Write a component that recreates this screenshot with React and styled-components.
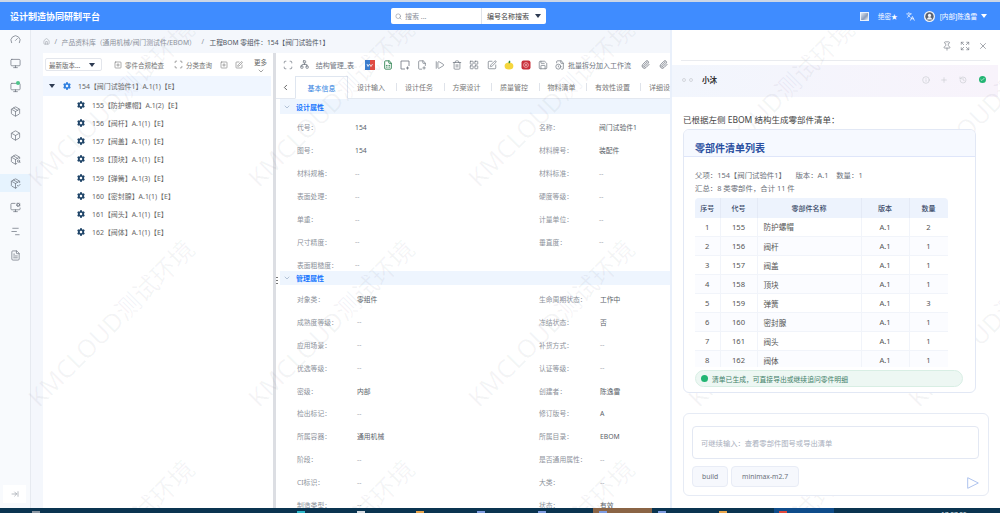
import React from 'react';
import styled, { createGlobalStyle } from 'styled-components';
import {
  Gauge, Monitor, Package, Box, PackageSearch, PackageCheck, MonitorCog, ChartNoAxesGantt, FileText,
  ArrowRightToLine, House, Search, Languages, Pin, Expand, X, Info, Plus, History, Check,
  Scan, Network, FileSpreadsheet, FilePlus2, StepForward, Trash2, LayoutGrid, SquarePen, Save, FileClock,
  Paperclip, SquarePlus, ChevronDown, ChevronLeft,
} from 'lucide-react';
import { FaCog } from 'react-icons/fa';

const FONT = `"Noto Sans", "Noto Sans CJK SC", sans-serif`;

const GlobalStyle = createGlobalStyle`
  * { margin: 0; padding: 0; box-sizing: border-box; }
  body { background: #fff; font-family: ${FONT}; overflow: hidden; }
`;

const Page = styled.div`
  position: relative;
  width: 1000px;
  height: 513px;
  overflow: hidden;
  display: flex;
  flex-direction: column;
  color: #444;
  border-top: 2px solid #ccd6e6;
`;

const Header = styled.header`
  position: relative;
  z-index: 3;
  height: 28px;
  flex: none;
  background: #3f8cff;
  color: #fff;
  display: flex;
  align-items: center;
  padding-left: 10px;
`;
const Title = styled.h1`
  width: 381px;
  font-size: 9px;
  font-weight: 700;
  white-space: nowrap;
`;
const SearchBox = styled.div`
  width: 155px;
  height: 16px;
  background: #fff;
  border-radius: 2px;
  display: flex;
  align-items: center;
  color: #8a8f99;
  font-size: 7px;
`;
const SearchInput = styled.div`
  width: 91px;
  height: 100%;
  display: flex;
  align-items: center;
  gap: 3px;
  padding-left: 4px;
  border-right: 1px solid #dfe3ea;
`;
const SearchType = styled.div`
  flex: 1;
  display: flex;
  align-items: center;
  justify-content: space-between;
  padding: 0 5px;
  color: #444;
`;
const Caret = styled.i`
  width: 0;
  height: 0;
  border-left: 3px solid transparent;
  border-right: 3px solid transparent;
  border-top: 4px solid ${p => p.$color || '#2e3b52'};
`;
const HeaderRight = styled.div`
  margin-left: auto;
  display: flex;
  align-items: center;
  font-size: 6.6px;
  padding-right: 13px;
`;
const HeaderThumb = styled.span`
  width: 9px;
  height: 9px;
  margin-right: 9px;
  background: linear-gradient(135deg, #dfe8f5, #8a9cba 60%, #eef3fa);
  border: 1px solid #eaf1fb;
`;
const Translate = styled(Languages)`
  margin: 0 9px 0 8px;
`;
const UserName = styled.span`
  margin: 0 4px 0 5px;
`;

const Body = styled.div`
  flex: 1;
  min-height: 0;
  display: flex;
`;

const Sidebar = styled.nav`
  width: 31px;
  flex: none;
  background: #f8fafd;
  border-right: 1px solid #e6eaf0;
  display: flex;
  flex-direction: column;
  align-items: stretch;
`;
const SideItem = styled.div`
  position: relative;
  height: 18px;
  margin-bottom: 6px;
  display: flex;
  align-items: center;
  justify-content: center;
  color: #6d7480;
  background: ${p => (p.$active ? '#e6f3fe' : 'transparent')};
`;
const SideDot = styled.i`
  position: absolute;
  left: 16px;
  top: 3px;
  width: 4px;
  height: 4px;
  border-radius: 50%;
  background: #4cc38a;
`;
const Collapse = styled.button`
  margin: auto 4px 5px 3px;
  height: 18px;
  border: none;
  background: #fff;
  color: #8c929c;
  display: flex;
  align-items: center;
  justify-content: center;
`;

const Main = styled.main`
  width: 639px;
  flex: none;
  background: #f4f7fc;
  padding-left: 12px;
  display: flex;
  flex-direction: column;
`;
const Crumbs = styled.div`
  height: 23px;
  flex: none;
  display: flex;
  align-items: center;
  font-size: 6.85px;
  color: #8b909a;
  white-space: nowrap;
`;
const CrumbSep = styled.span`
  margin: 0 ${p => p.$gap}px;
`;
const CrumbNow = styled.span`
  font-size: 6.7px;
  color: #4c5360;
`;
const Workspace = styled.div`
  flex: 1;
  min-height: 0;
  display: flex;
  background: #fff;
`;

const TreePanel = styled.section`
  width: 230px;
  flex: none;
  display: flex;
  flex-direction: column;
`;
const TreeBar = styled.div`
  height: 23px;
  flex: none;
  display: flex;
  align-items: center;
  padding-left: 2px;
  font-size: 6.5px;
  color: #666;
  white-space: nowrap;
`;
const VersionSelect = styled.div`
  width: 57px;
  height: 13px;
  border: 1px solid #e3e6ec;
  border-radius: 2px;
  display: flex;
  align-items: center;
  justify-content: space-between;
  padding: 0 6px 0 3px;
  margin-right: 12px;
`;
const BarAction = styled.span`
  display: flex;
  align-items: center;
  gap: 3px;
  margin-right: ${p => p.$gap}px;
  color: #777;
`;
const More = styled.span`
  display: flex;
  flex-direction: column;
  align-items: center;
  margin: 5px 0 0 4px;
  line-height: 8px;
  color: #666;
`;
const TreeRow = styled.div`
  height: ${p => (p.$root ? 19.5 : 18.25)}px;
  flex: none;
  display: flex;
  align-items: center;
  padding-left: ${p => (p.$root ? 6 : 34)}px;
  background: ${p => (p.$root ? '#f0f6ff' : 'transparent')};
  font-size: 6.95px;
  color: #666;
  white-space: nowrap;
  width: 228px;
`;
const Gear = styled(FaCog)`
  width: 8px;
  height: 8px;
  margin-right: 7px;
  color: ${p => (p.$root ? '#2f80e0' : '#1f4468')};
`;
const TreeCaret = styled(Caret)`
  margin-right: 8px;
`;

const Splitter = styled.div`
  width: 3px;
  flex: none;
  background: #dcdee3;
`;

const DetailPanel = styled.section`
  position: relative;
  flex: 1;
  min-width: 0;
  overflow: hidden;
  display: flex;
  flex-direction: column;
`;
const ToolBar = styled.div`
  height: 23px;
  flex: none;
  display: flex;
  align-items: center;
  padding-left: 3px;
  font-size: 7px;
  color: #666;
  white-space: nowrap;
`;
const ToolIcon = styled.span`
  width: 17.3px;
  flex: none;
  display: flex;
  justify-content: center;
  color: #6f7580;
`;
const ToolLabel = styled.span`
  display: flex;
  align-items: center;
  gap: ${p => p.$gap}px;
  width: ${p => p.$w}px;
  padding-left: ${p => p.$pad}px;
  flex: none;
  color: #6f7580;
`;
const Tabs = styled.div`
  height: 23px;
  flex: none;
  display: flex;
  align-items: stretch;
  font-size: 7px;
  color: #777;
  white-space: nowrap;
  border-bottom: 1px solid #e3e8f0;
`;
const TabBack = styled.span`
  width: 19px;
  flex: none;
  display: flex;
  align-items: center;
  justify-content: center;
  color: #555;
`;
const ActiveTab = styled.span`
  width: 53px;
  flex: none;
  display: flex;
  align-items: center;
  justify-content: center;
  color: #2f80e0;
  border: 1px solid #dfe6f0;
  border-bottom: 1px solid #fff;
  margin-bottom: -1px;
  padding-top: 1px;
`;
const TabItem = styled.span`
  display: flex;
  align-items: center;
  width: ${p => p.$w}px;
  flex: none;
  padding-left: 9px;
  position: relative;
  &::before {
    content: '';
    display: ${p => (p.$sep ? 'block' : 'none')};
    position: absolute;
    left: 0;
    top: 7px;
    height: 8px;
    width: 1px;
    background: #dfe3ea;
  }
`;
const SectionHead = styled.div`
  height: ${p => p.$h}px;
  flex: none;
  margin-left: 4px;
  background: #eef5fe;
  color: #1677ff;
  font-size: 7px;
  font-weight: 700;
  display: flex;
  align-items: center;
  gap: 5px;
  padding-left: 3px;
  svg { color: #8aa0bc; }
`;
const Grip = styled.span`
  position: absolute;
  left: 0;
  top: 224px;
  width: 2px;
  height: 9px;
  background: repeating-linear-gradient(#777 0 1px, transparent 1px 3px);
`;
const Fields = styled.div`
  flex: none;
  display: grid;
  grid-template-columns: 242px 1fr;
  grid-auto-rows: 22.9px;
  padding: ${p => p.$top}px 0 0 21px;
  height: ${p => (p.$h ? `${p.$h}px` : 'auto')};
  font-size: 6.8px;
  white-space: nowrap;
`;
const Field = styled.div`
  display: flex;
  align-items: center;
`;
const FieldLabel = styled.span`
  width: ${p => p.$w}px;
  flex: none;
  color: #8d929b;
`;
const FieldValue = styled.span`
  color: ${p => (p.$empty ? '#a4a8b0' : '#5a5f69')};
`;

const AiPanel = styled.aside`
  flex: 1;
  min-width: 0;
  background: #fff;
  border-left: 2px solid #e9f0fb;
  display: flex;
  flex-direction: column;
  padding-bottom: 3px;
`;
const AiTop = styled.div`
  height: 31px;
  flex: none;
  margin: 0 10px 4px 9px;
  border-bottom: 1px solid #e9ebef;
  display: flex;
  align-items: center;
  justify-content: flex-end;
  gap: 8px;
  padding: 1px 2px 0 0;
  color: #777c85;
`;
const AiHead = styled.div`
  height: 32px;
  flex: none;
  margin-right: 2px;
  background: linear-gradient(90deg, #f2f6fd, #f8f3fb);
  display: flex;
  align-items: center;
  padding: 0 12px 3px 10px;
`;
const HeadDot = styled.i`
  width: 4px;
  height: 4px;
  margin-right: 3px;
  border: 1px solid #d4d7dd;
  border-radius: 50%;
`;
const AiName = styled.b`
  margin-left: 6px;
  font-size: 7.5px;
  font-weight: 700;
  color: #333;
`;
const HeadTools = styled.div`
  margin-left: auto;
  display: flex;
  align-items: center;
  gap: 10.5px;
  color: #c6c9cf;
`;
const OkBadge = styled.span`
  width: 7px;
  height: 7px;
  margin-left: 2px;
  border-radius: 50%;
  background: #22b573;
  color: #fff;
  display: flex;
  align-items: center;
  justify-content: center;
`;
const Lead = styled.p`
  margin: 18px 0 0 11px;
  height: 14px;
  font-size: 8.5px;
  line-height: 10px;
  color: #444;
  white-space: nowrap;
`;
const ListCard = styled.div`
  position: relative;
  z-index: 2;
  width: 293px;
  height: 264px;
  flex: none;
  margin-left: 11px;
  background: #fff;
  border: 1px solid #e2e8f5;
  border-radius: 6px;
  overflow: hidden;
`;
const CardHead = styled.div`
  height: 27px;
  background: #f6f9ff;
  border-bottom: 1px solid #dfe6fa;
  padding: 11px 0 0 11px;
  color: #2a4fa0;
  font-size: 10px;
  line-height: 14px;
  font-weight: 700;
`;
const CardMeta = styled.p`
  padding-left: 11px;
  font-size: 7.4px;
  line-height: 13px;
  color: #6b7079;
  white-space: nowrap;
  &:first-of-type { margin-top: 12px; }
`;
const TableClip = styled.div`
  margin: 3px 0 0 11px;
  width: 253px;
  height: 169px;
  overflow: hidden;
  border-radius: 4px 4px 0 0;
`;
const PartsTable = styled.table`
  width: 253px;
  border-collapse: collapse;
  table-layout: fixed;
  font-size: 7.6px;
  color: #555;
`;
const HeadCell = styled.th`
  height: 19.5px;
  background: #edf3fd;
  color: #3a4a68;
  font-weight: 500;
  font-size: 7px;
  border-right: 1px solid #e4eaf6;
`;
const Cell = styled.td`
  height: 19px;
  text-align: ${p => (p.$left ? 'left' : 'center')};
  padding-left: ${p => (p.$left ? 6 : 0)}px;
  border-right: 1px solid #f1f4fa;
  border-bottom: 1px solid #f1f4fa;
  background: ${p => (p.$odd ? '#fbfcff' : '#fff')};
`;
const StatusPill = styled.div`
  margin: 3px 0 0 11px;
  width: 268px;
  height: 17px;
  background: #edf7f3;
  border: 1px solid #d8eee4;
  border-radius: 9px;
  display: flex;
  align-items: center;
  gap: 4px;
  padding-left: 5px;
  font-size: 6.8px;
  color: #3f8069;
  white-space: nowrap;
`;
const StatusDot = styled.i`
  width: 7px;
  height: 7px;
  border-radius: 50%;
  background: #22b573;
`;
const Composer = styled.div`
  position: relative;
  z-index: 2;
  width: 306px;
  height: 83px;
  flex: none;
  margin: 20px 0 0 11px;
  background: #fff;
  border: 1px solid #e6ebf5;
  border-radius: 6px;
  padding: 12px 9px 0 8px;
`;
const Prompt = styled.div`
  height: 33px;
  border: 1px solid #e3e8f3;
  border-radius: 4px;
  display: flex;
  align-items: center;
  padding-left: 8px;
  font-size: 7.3px;
  color: #a9afbd;
`;
const ComposerFoot = styled.div`
  margin-top: 7px;
  display: flex;
  align-items: flex-start;
  gap: 3px;
`;
const Chip = styled.span`
  height: 21px;
  padding: 0 ${p => p.$pad}px;
  background: #f6f8fd;
  border: 1px solid #e8ecf6;
  border-radius: 4px;
  display: flex;
  align-items: center;
  font-size: 6.8px;
  color: #6b7079;
`;
const SendMark = styled.svg`
  margin: 11px 0 0 auto;
  width: 12px;
  height: 12px;
`;

const Taskbar = styled.footer`
  position: relative;
  z-index: 3;
  height: 5px;
  flex: none;
  background: #0a3450;
  display: flex;
  overflow: hidden;
`;
const TaskSlot = styled.span`
  width: ${p => p.$w}px;
  flex: none;
  height: 100%;
  background: ${p => p.$bg || 'transparent'};
  padding-left: ${p => p.$off}px;
`;
const TaskTip = styled.i`
  display: block;
  width: 8px;
  height: 2px;
  margin-top: 3px;
  background: ${p => p.$color};
`;
const Clock = styled.span`
  margin: 2.5px 0 0 107px;
  font-size: 6.5px;
  line-height: 8px;
  color: #dfe6ee;
  white-space: nowrap;
`;

const WatermarkLayer = styled.div`
  position: absolute;
  z-index: 1;
  left: 0;
  top: -10px;
  width: 1100px;
  height: 660px;
  pointer-events: none;
  display: grid;
  grid-template-columns: repeat(5, 220px);
  grid-auto-rows: 220px;
`;
const Mark = styled.span`
  display: flex;
  align-items: center;
  justify-content: center;
  font-size: 25px;
  color: rgba(70, 80, 100, 0.06);
  white-space: nowrap;
  transform: rotate(-45deg);
`;

const sideIcons = [Gauge, Monitor, Monitor, Package, Box, PackageSearch, PackageCheck, MonitorCog, ChartNoAxesGantt, FileText];

const treeRows = [
  '155【防护螺帽】A.1(2)【E】', '156【阀杆】A.1(1)【E】', '157【阀盖】A.1(1)【E】', '158【顶块】A.1(1)【E】',
  '159【弹簧】A.1(3)【E】', '160【密封腺】A.1(1)【E】', '161【阀头】A.1(1)【E】', '162【阀体】A.1(1)【E】',
];

const design = [
  ['代号：', '154', '名称：', '阀门试验件1'],
  ['图号：', '154', '材料牌号：', '装配件'],
  ['材料规格：', '--', '材料标准：', '--'],
  ['表面处理：', '--', '硬度等级：', '--'],
  ['单重：', '--', '计量单位：', '--'],
  ['尺寸精度：', '--', '垂直度：', '--'],
  ['表面粗糙度：', '--', '', ''],
];

const manage = [
  ['对象类：', '零组件', '生命周期状态：', '工作中'],
  ['成熟度等级：', '--', '冻结状态：', '否'],
  ['应用场景：', '--', '补货方式：', '--'],
  ['优选等级：', '--', '认证等级：', '--'],
  ['密级：', '内部', '创建者：', '陈逸雷'],
  ['检出标记：', '--', '修订版号：', 'A'],
  ['所属容器：', '通用机械', '所属目录：', 'EBOM'],
  ['阶段：', '--', '是否通用属性：', '--'],
  ['CI标识：', '--', '大类：', '--'],
  ['制造类型：', '--', '状态：', '有效'],
];

const parts = [
  [1, 155, '防护螺帽', 2], [2, 156, '阀杆', 1], [3, 157, '阀盖', 1], [4, 158, '顶块', 1],
  [5, 159, '弹簧', 3], [6, 160, '密封腺', 1], [7, 161, '阀头', 1], [8, 162, '阀体', 1],
];

const tabs = [['设计输入', 48, false], ['设计任务', 47.5, true], ['方案设计', 47.5, true], ['质量管控', 47.5, true], ['物料清单', 47.5, true], ['有效性设置', 54, true], ['详细设计', 60, true]];

const taskSlots = [
  { w: 6 }, { w: 60, off: 26, tip: '#8b97a3' }, { w: 205 },
  { w: 60, off: 26, tip: '#2bb7c9' }, { w: 60, off: 26, tip: '#d5dbe2' }, { w: 60, off: 25, tip: '#e8a44a' },
  { w: 60, off: 26, tip: '#7d9be0' }, { w: 51, off: 27, tip: '#7d9be0' }, { w: 31 },
  { w: 59, off: 6, tip: '#7d9be0', bg: '#8a6445' }, { w: 5 }, { w: 60, off: 1, tip: '#7d9be0' },
  { w: 57, off: 2, tip: '#e8a44a' }, { w: 60, off: 5, tip: '#e0483a', bg: '#0f4c8a' },
];

const UserAvatar = () => (
  <svg width="11" height="11" viewBox="0 0 11 11">
    <circle cx="5.5" cy="5.5" r="5.5" fill="#f1f4f8" />
    <circle cx="5.5" cy="5.5" r="4.2" fill="#5b6270" />
    <circle cx="5.5" cy="4.4" r="1.6" fill="#f1f4f8" />
    <path d="M2.8 8.4c.5-1.5 1.5-2.1 2.7-2.1s2.2.6 2.7 2.1" fill="#f1f4f8" />
  </svg>
);
const WordBadge = () => (
  <svg width="10" height="10" viewBox="0 0 10 10">
    <rect width="5" height="10" fill="#3b7fd0" />
    <rect x="5" width="5" height="10" fill="#e04b43" />
    <path d="M2 4l1 2.5L4.5 4 6 6.5 7.5 4" fill="none" stroke="#fff" strokeWidth=".8" />
  </svg>
);
const LemonBadge = () => (
  <svg width="10" height="10" viewBox="0 0 10 10">
    <ellipse cx="5" cy="6" rx="4.4" ry="3.6" fill="#f5d63d" />
    <path d="M5 3.5C4 2.5 4.5 1 6 .5 6.6 2 6.4 3 5 3.5z" fill="#2f8a3c" />
  </svg>
);
const SealBadge = () => (
  <svg width="10" height="10" viewBox="0 0 10 10">
    <rect x=".5" y=".5" width="9" height="9" rx="2" fill="#c8303a" />
    <circle cx="5" cy="5" r="2.4" fill="none" stroke="#f3b6ba" strokeWidth=".8" />
    <circle cx="5" cy="5" r=".9" fill="#f3b6ba" />
  </svg>
);
const FramePlus = () => (
  <svg width="10" height="10" viewBox="0 0 10 10" fill="none" stroke="currentColor" strokeWidth=".8">
    <path d="M9 6V1H1v8h4" />
    <path d="M7.5 6.5v3M6 8h3" />
  </svg>
);

const Row = ({ row, leftW, rightW }) => (
  <>
    <Field>
      <FieldLabel $w={leftW}>{row[0]}</FieldLabel>
      <FieldValue $empty={row[1] === '--'}>{row[1]}</FieldValue>
    </Field>
    <Field>
      <FieldLabel $w={rightW}>{row[2]}</FieldLabel>
      <FieldValue $empty={row[3] === '--'}>{row[3]}</FieldValue>
    </Field>
  </>
);

export default function App() {
  return (
    <Page>
      <GlobalStyle />
      <Header>
        <Title>设计制造协同研制平台</Title>
        <SearchBox>
          <SearchInput><Search size={7} />搜索 ...</SearchInput>
          <SearchType>编号名称搜索<Caret /></SearchType>
        </SearchBox>
        <HeaderRight>
          <HeaderThumb />
          绝密★
          <Translate size={9} />
          <UserAvatar />
          <UserName>[内部]陈逸雷</UserName>
          <Caret $color="#fff" />
        </HeaderRight>
      </Header>
      <WatermarkLayer>
        {Array.from({ length: 15 }).map((_, i) => <Mark key={i}>KMCLOUD测试环境</Mark>)}
      </WatermarkLayer>
      <Body>
        <Sidebar>
          {sideIcons.map((Icon, i) => (
            <SideItem key={i} $active={i === 6}>
              <Icon size={11} strokeWidth={1.6} />
              {i === 2 && <SideDot />}
            </SideItem>
          ))}
          <Collapse><ArrowRightToLine size={8} strokeWidth={1.8} /></Collapse>
        </Sidebar>
        <Main>
          <Crumbs>
            <House size={7} strokeWidth={1.6} />
            <CrumbSep $gap={4.5}>/</CrumbSep>
            产品资料库（通用机械/阀门测试件/EBOM）
            <CrumbSep $gap={5.5}>/</CrumbSep>
            <CrumbNow>工程BOM 零组件：154【阀门试验件1】</CrumbNow>
          </Crumbs>
          <Workspace>
            <TreePanel>
              <TreeBar>
                <VersionSelect>最新版本...<Caret /></VersionSelect>
                <BarAction $gap={10}><SquarePlus size={8} strokeWidth={1.8} />零件合规检查</BarAction>
                <BarAction $gap={8}><Scan size={9} strokeWidth={1.8} />分类查询</BarAction>
                <BarAction $gap={7}><SquarePlus size={8} strokeWidth={1.8} /></BarAction>
                <BarAction $gap={7}><SquarePen size={8} strokeWidth={1.8} /></BarAction>
                <More>更多<ChevronDown size={8} strokeWidth={1.8} /></More>
              </TreeBar>
              <TreeRow $root>
                <TreeCaret />
                <Gear $root />
                154【阀门试验件1】A.1(1)【E】
              </TreeRow>
              {treeRows.map(t => (
                <TreeRow key={t}><Gear />{t}</TreeRow>
              ))}
            </TreePanel>
            <Splitter />
            <DetailPanel>
              <Grip />
              <ToolBar>
                <ToolIcon><Scan size={10} strokeWidth={1.7} /></ToolIcon>
                <ToolLabel $w={65.5} $pad={3.5} $gap={7}><Network size={9} strokeWidth={2} />结构管理_表</ToolLabel>
                <ToolIcon><WordBadge /></ToolIcon>
                <ToolIcon><FileSpreadsheet size={10} color="#1f7a45" strokeWidth={2} /></ToolIcon>
                <ToolIcon><FramePlus /></ToolIcon>
                <ToolIcon><FilePlus2 size={10} strokeWidth={1.7} /></ToolIcon>
                <ToolIcon><StepForward size={10} strokeWidth={1.7} /></ToolIcon>
                <ToolIcon><Trash2 size={10} strokeWidth={1.7} /></ToolIcon>
                <ToolIcon><LayoutGrid size={10} strokeWidth={1.7} /></ToolIcon>
                <ToolIcon><SquarePen size={10} strokeWidth={1.7} /></ToolIcon>
                <ToolIcon><LemonBadge /></ToolIcon>
                <ToolIcon><SealBadge /></ToolIcon>
                <ToolIcon><Save size={10} strokeWidth={1.7} /></ToolIcon>
                <ToolLabel $w={85} $pad={3} $gap={3}><FileClock size={10} strokeWidth={1.7} />批量拆分加入工作流</ToolLabel>
                <ToolIcon><Paperclip size={9} strokeWidth={2.2} /></ToolIcon>
                <ToolIcon><Paperclip size={9} strokeWidth={2.2} /></ToolIcon>
              </ToolBar>
              <Tabs>
                <TabBack><ChevronLeft size={9} strokeWidth={2.4} /></TabBack>
                <ActiveTab>基本信息</ActiveTab>
                {tabs.map(([t, w, sep]) => <TabItem key={t} $w={w} $sep={sep}>{t}</TabItem>)}
              </Tabs>
              <SectionHead $h={15}><ChevronDown size={8} strokeWidth={1.8} />设计属性</SectionHead>
              <Fields $top={2} $h={157}>
                {design.map(r => <Row key={r[0]} row={r} leftW={58} rightW={60} />)}
              </Fields>
              <SectionHead $h={14}><ChevronDown size={8} strokeWidth={1.8} />管理属性</SectionHead>
              <Fields $top={2.5}>
                {manage.map(r => <Row key={r[0]} row={r} leftW={60} rightW={61} />)}
              </Fields>
            </DetailPanel>
          </Workspace>
        </Main>
        <AiPanel>
          <AiTop>
            <Pin size={10} strokeWidth={1.6} />
            <Expand size={10} strokeWidth={1.6} />
            <X size={10} strokeWidth={1.6} />
          </AiTop>
          <AiHead>
            <HeadDot />
            <HeadDot />
            <AiName>小沐</AiName>
            <HeadTools>
              <Info size={8} strokeWidth={1.8} />
              <Plus size={8} strokeWidth={1.8} />
              <History size={8} strokeWidth={1.8} />
              <OkBadge><Check size={5} strokeWidth={3} /></OkBadge>
            </HeadTools>
          </AiHead>
          <Lead>已根据左侧 EBOM 结构生成零部件清单：</Lead>
          <ListCard>
            <CardHead>零部件清单列表</CardHead>
            <CardMeta>父项：154【阀门试验件1】&nbsp;&nbsp;&nbsp;&nbsp;&nbsp;版本：A.1&nbsp;&nbsp;&nbsp;&nbsp;数量：1</CardMeta>
            <CardMeta>汇总：8 类零部件，合计 11 件</CardMeta>
            <TableClip>
              <PartsTable>
                <colgroup>
                  <col width="25" /><col width="37" /><col width="104" /><col width="48" /><col width="39" />
                </colgroup>
                <thead>
                  <tr>
                    <HeadCell>序号</HeadCell><HeadCell>代号</HeadCell><HeadCell>零部件名称</HeadCell><HeadCell>版本</HeadCell><HeadCell>数量</HeadCell>
                  </tr>
                </thead>
                <tbody>
                  {parts.map(([n, code, name, qty], i) => (
                    <tr key={n}>
                      <Cell $odd={i % 2 === 1}>{n}</Cell>
                      <Cell $odd={i % 2 === 1}>{code}</Cell>
                      <Cell $odd={i % 2 === 1} $left>{name}</Cell>
                      <Cell $odd={i % 2 === 1}>A.1</Cell>
                      <Cell $odd={i % 2 === 1}>{qty}</Cell>
                    </tr>
                  ))}
                </tbody>
              </PartsTable>
            </TableClip>
            <StatusPill><StatusDot />清单已生成，可直接导出或继续追问零件明细</StatusPill>
          </ListCard>
          <Composer>
            <Prompt>可继续输入：查看零部件图号或导出清单</Prompt>
            <ComposerFoot>
              <Chip $pad={9}>build</Chip>
              <Chip $pad={10}>minimax-m2.7</Chip>
              <SendMark viewBox="0 0 12 12">
                <path d="M.7.7 11.3 6 .7 11.3z" fill="none" stroke="#aec3ee" strokeWidth="1" />
              </SendMark>
            </ComposerFoot>
          </Composer>
        </AiPanel>
      </Body>
      <Taskbar>
        {taskSlots.map((s, i) => (
          <TaskSlot key={i} $w={s.w} $off={s.off || 0} $bg={s.bg}>
            {s.tip && <TaskTip $color={s.tip} />}
          </TaskSlot>
        ))}
        <Clock>17:07:05</Clock>
      </Taskbar>
    </Page>
  );
}
